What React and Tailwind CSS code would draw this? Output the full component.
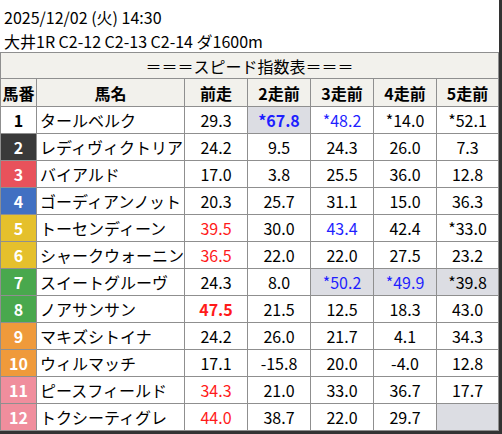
import React from "react";

const waku = {
  1: "bg-white text-black",
  2: "bg-[#3a3a3a] text-white",
  3: "bg-[#e8525b] text-white",
  4: "bg-[#4170c2] text-white",
  5: "bg-[#e5c02c] text-white",
  6: "bg-[#e5c02c] text-white",
  7: "bg-[#49a84d] text-white",
  8: "bg-[#49a84d] text-white",
  9: "bg-[#ef9a3b] text-white",
  10: "bg-[#ef9a3b] text-white",
  11: "bg-[#f08e9d] text-white",
  12: "bg-[#f08e9d] text-white",
};

// c: r = red, b = blue / bold / g = grey cell
const rows = [
  ["タールベルク", [{ v: "29.3" }, { v: "*67.8", c: "b", bold: true, g: true }, { v: "*48.2", c: "b" }, { v: "*14.0" }, { v: "*52.1" }]],
  ["レディヴィクトリア", [{ v: "24.2" }, { v: "9.5" }, { v: "24.3" }, { v: "26.0" }, { v: "7.3" }]],
  ["バイアルド", [{ v: "17.0" }, { v: "3.8" }, { v: "25.5" }, { v: "36.0" }, { v: "12.8" }]],
  ["ゴーディアンノット", [{ v: "20.3" }, { v: "25.7" }, { v: "31.1" }, { v: "15.0" }, { v: "36.3" }]],
  ["トーセンディーン", [{ v: "39.5", c: "r" }, { v: "30.0" }, { v: "43.4", c: "b" }, { v: "42.4" }, { v: "*33.0" }]],
  ["シャークウォーニン", [{ v: "36.5", c: "r" }, { v: "22.0" }, { v: "22.0" }, { v: "27.5" }, { v: "23.2" }]],
  ["スイートグルーヴ", [{ v: "24.3" }, { v: "8.0" }, { v: "*50.2", c: "b", g: true }, { v: "*49.9", c: "b", g: true }, { v: "*39.8", g: true }]],
  ["ノアサンサン", [{ v: "47.5", c: "r", bold: true }, { v: "21.5" }, { v: "12.5" }, { v: "18.3" }, { v: "43.0" }]],
  ["マキズシトイナ", [{ v: "24.2" }, { v: "26.0" }, { v: "21.7" }, { v: "4.1" }, { v: "34.3" }]],
  ["ウィルマッチ", [{ v: "17.1" }, { v: "-15.8" }, { v: "20.0" }, { v: "-4.0" }, { v: "12.8" }]],
  ["ピースフィールド", [{ v: "34.3", c: "r" }, { v: "21.0" }, { v: "33.0" }, { v: "36.7" }, { v: "17.7" }]],
  ["トクシーティグレ", [{ v: "44.0", c: "r" }, { v: "38.7" }, { v: "22.0" }, { v: "29.7" }, { v: "", g: true }]],
];

const heads = ["馬番", "馬名", "前走", "2走前", "3走前", "4走前", "5走前"];

const cell = "border-r border-b border-[#8f8f8f]";

const App = () => {
  return (
    <div
      className="w-[502px] h-[434px] bg-white border-r-[3px] border-b-[3px] border-[#333] overflow-hidden text-black"
      style={{ fontFamily: '"Noto Sans CJK JP", "Noto Sans", sans-serif' }}
    >
      {/* race info */}
      <div className="h-[52px] pl-1 pt-[5px] text-[16px] leading-6">
        <div>2025/12/02 (火) 14:30</div>
        <div>大井1R C2-12 C2-13 C2-14 ダ1600m</div>
      </div>

      <div className="grid grid-cols-[36px_148px_63px_63px_63px_63px_62px] border-l border-t border-[#8f8f8f] text-[16px]">
        <div className={`col-span-7 h-[26px] flex items-center justify-center bg-[#f2f1ec] ${cell}`}>
          ＝＝＝スピード指数表＝＝＝
        </div>

        {heads.map((h) => (
          <div key={h} className={`h-[28px] flex items-center justify-center bg-[#f2f1ec] font-bold ${cell}`}>
            {h}
          </div>
        ))}

        {rows.map(([name, vals], i) => (
          <React.Fragment key={name}>
            <div className={`h-[27px] flex items-center justify-center font-bold ${waku[i + 1]} ${cell}`}>
              {i + 1}
            </div>
            <div className={`h-[27px] flex items-center pl-[3px] whitespace-nowrap overflow-hidden ${cell}`}>
              {name}
            </div>
            {vals.map((d, j) => (
              <div
                key={j}
                className={`h-[27px] flex items-center justify-center ${cell} ${d.g ? "bg-[#dcdde3]" : ""} ${
                  d.c === "r" ? "text-[#ff1a1a]" : d.c === "b" ? "text-[#1f1fff]" : ""
                } ${d.bold ? "font-bold" : ""}`}
              >
                {d.v}
              </div>
            ))}
          </React.Fragment>
        ))}
      </div>
    </div>
  );
};

export default App;
